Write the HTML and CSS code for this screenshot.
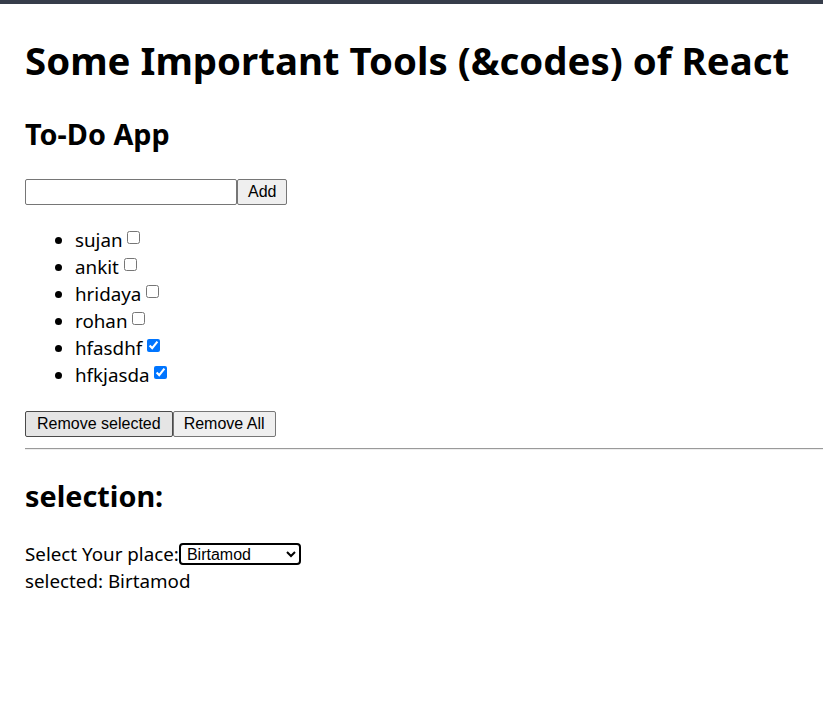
FILE: index.html
```html
<!DOCTYPE html>
<html>
<head>
<meta charset="utf-8">
<link rel="stylesheet" href="styles.css">
</head>
<body>
<div class="topbar"></div>
<div class="app">
  <h1 class="title">Some Important Tools (&amp;codes) of React</h1>
  <h2 class="sub">To-Do App</h2>
  <div class="add-row"><input class="todo-input" type="text"><button class="btn">Add</button></div>
  <ul class="todo-list">
    <li>sujan <input class="chk" type="checkbox"></li>
    <li>ankit <input class="chk" type="checkbox"></li>
    <li>hridaya <input class="chk" type="checkbox"></li>
    <li>rohan <input class="chk" type="checkbox"></li>
    <li>hfasdhf <input class="chk" type="checkbox" checked></li>
    <li>hfkjasda <input class="chk" type="checkbox" checked></li>
  </ul>
  <div class="actions"><button class="btn btn-dark">Remove selected</button><button class="btn">Remove All</button></div>
  <hr class="divider">
  <h2 class="sub sub-sel">selection:</h2>
  <div class="place">Select Your place:<select class="place-select"><option>Birtamod</option><option>Damak</option><option>Kathmandu</option></select></div>
  <div class="place">selected: Birtamod</div>
</div>
</body>
</html>
```
FILE: styles.css
```css
html, body {
  margin: 0;
  padding: 0;
  background: #fff;
}
body {
  font-family: "Noto Sans", "Open Sans", sans-serif;
  font-size: 18.8px;
  color: #000;
}
.topbar {
  height: 4px;
  background: #363d4a;
}
.app {
  padding: 0 0 0 25px;
}
.title {
  font-size: 38.4px;
  font-weight: 700;
  margin: 30px 0 27px;
  line-height: 53px;
}
.sub {
  font-size: 28.8px;
  font-weight: 700;
  margin: 25px 0;
  line-height: 40px;
}
.sub-sel {
  margin: 26px 0 25px;
}
.add-row {
  display: flex;
  align-items: stretch;
}
.todo-input {
  width: 212px;
  height: 26px;
  box-sizing: border-box;
  border: 1px solid #767676;
  border-radius: 2px;
  margin: 0;
  font-size: 16px;
  font-family: "Liberation Sans", Arial, sans-serif;
}
.btn {
  font-family: "Liberation Sans", Arial, sans-serif;
  font-size: 16px;
  height: 26px;
  box-sizing: border-box;
  padding: 0 10px;
  margin: 0;
  background: #efefef;
  border: 1px solid #767676;
  border-radius: 2px;
  color: #000;
}
.btn-dark {
  padding: 0 11px;
  background: #e5e5e5;
  border-color: #4a4a4a;
}
.todo-list {
  margin: 22px 0 22px;
  padding-left: 50px;
  line-height: 27px;
}
.chk {
  margin: 0;
  width: 13px;
  height: 13px;
  vertical-align: 3px;
}
.actions {
  display: flex;
}
.divider {
  margin: 11px 0 10px;
  border: 0;
  border-top: 1px solid #9a9a9a;
  border-bottom: 1px solid #eee;
}
.place {
  line-height: 27px;
}
.place-select {
  font-family: "Liberation Sans", Arial, sans-serif;
  font-size: 16px;
  width: 122px;
  height: 22px;
  border: 2px solid #000;
  border-radius: 4px;
  padding: 0 0 0 2px;
  background: #fff;
  vertical-align: 1px;
}
```
